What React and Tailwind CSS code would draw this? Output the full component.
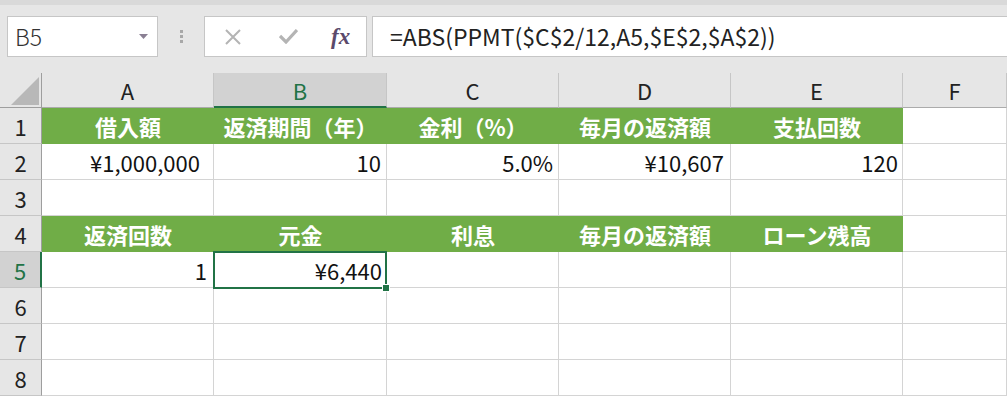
import React from 'react';

const FONT = { fontFamily: '"Noto Sans CJK JP", "Noto Sans", sans-serif' };

const columns = ['A', 'B', 'C', 'D', 'E', 'F'];

// each row: 6 cells (A..F), null = empty
const rows = [
  { n: 1, green: true, cells: ['借入額', '返済期間（年）', '金利（%）', '毎月の返済額', '支払回数', null] },
  { n: 2, cells: ['¥1,000,000', '10', '5.0%', '¥10,607', '120', null], pad: ['pr-[13px]', 'pr-[5px]', 'pr-[5px]', 'pr-[6px]', 'pr-[4px]', ''] },
  { n: 3, cells: [null, null, null, null, null, null] },
  { n: 4, green: true, cells: ['返済回数', '元金', '利息', '毎月の返済額', 'ローン残高', null] },
  { n: 5, cells: ['1', '¥6,440', null, null, null, null], pad: ['pr-[6px]', 'pr-[4px]', '', '', '', ''], active: true },
  { n: 6, cells: [null, null, null, null, null, null] },
  { n: 7, cells: [null, null, null, null, null, null] },
  { n: 8, cells: [null, null, null, null, null, null] },
];

function Cell({ row, text, idx }) {
  const isGreen = row.green && idx < 5;
  if (isGreen) {
    return (
      <div className="h-[36px] bg-[#70ad47] flex items-center justify-center text-white font-bold text-[22px] leading-none">
        {text}
      </div>
    );
  }
  const selected = row.active && idx === 1;
  return (
    <div
      className={`relative h-[36px] border-r border-b border-[#d4d4d4] flex items-center justify-end text-[22px] leading-none text-[#111] ${
        row.pad ? row.pad[idx] : ''
      } ${selected ? 'z-10' : ''}`}
    >
      {text}
      {selected && (
        <>
          <div className="absolute -left-px -top-px w-[174px] h-[38px] border-2 border-[#217346]" />
          <div className="absolute -right-[4px] -bottom-[5px] w-[8px] h-[8px] bg-[#217346] border border-white" />
        </>
      )}
    </div>
  );
}

export default function App() {
  return (
    <div className="w-[1007px] h-[397px] overflow-hidden bg-white" style={FONT}>
      {/* Toolbar: name box + formula bar */}
      <div className="h-[73px] bg-[#e6e6e6] border-t-[5px] border-[#d9d9d9] flex items-start pt-[11px]">
        <div className="ml-[7px] w-[151px] h-[41px] bg-white border border-[#c6c6c6] flex items-center pl-[7px] pr-[9px]">
          <span className="text-[23px] font-light text-[#333] leading-none">B5</span>
          <svg className="ml-auto" width="9" height="5" viewBox="0 0 9 5">
            <path d="M0 0 L9 0 L4.5 5 Z" fill="#8a7f93" />
          </svg>
        </div>
        <div className="w-[46px] h-[41px] flex flex-col items-center justify-center gap-[2px]">
          <span className="w-[3px] h-[3px] bg-[#a8a8a8]" />
          <span className="w-[3px] h-[3px] bg-[#a8a8a8]" />
          <span className="w-[3px] h-[3px] bg-[#a8a8a8]" />
        </div>
        <div className="w-[163px] h-[41px] bg-white border border-[#c6c6c6] flex items-center">
          <svg className="ml-[20px]" width="16" height="16" viewBox="0 0 16 16">
            <path d="M1 1 L15 15 M15 1 L1 15" stroke="#b4b4b4" strokeWidth="2" />
          </svg>
          <svg className="ml-[38px]" width="19" height="15" viewBox="0 0 19 15">
            <path d="M1 7 L7 13 L18 1" stroke="#b4b4b4" strokeWidth="3.2" fill="none" />
          </svg>
          <span
            className="ml-[33px] text-[23px] italic font-bold text-[#5b4a6b] leading-none"
            style={{ fontFamily: '"Liberation Serif", serif' }}
          >
            fx
          </span>
        </div>
        <div className="ml-[5px] flex-1 h-[41px] bg-white border border-[#c6c6c6] border-r-0 flex items-center pl-[17px]">
          <span className="text-[23px] text-[#222] leading-none">=ABS(PPMT($C$2/12,A5,$E$2,$A$2))</span>
        </div>
      </div>

      {/* Sheet grid */}
      <div className="grid grid-cols-[42px_172px_173px_172px_172px_172px_1fr]">
        {/* Column headers */}
        <div className="relative h-[35px] bg-[#e6e6e6] border-r border-b border-[#9e9e9e]">
          <svg className="absolute left-[11px] top-[4px]" width="28" height="28" viewBox="0 0 28 28">
            <path d="M0 28 L28 28 L28 0 Z" fill="#b8b8b8" />
          </svg>
        </div>
        {columns.map((c, i) => (
          <div
            key={c}
            className={`h-[35px] flex items-center justify-center text-[22px] leading-none border-r border-[#c6c6c6] ${
              i === 1
                ? 'bg-[#d2d2d2] text-[#217346] border-b-2 border-b-[#217346]'
                : 'bg-[#e6e6e6] text-[#222] border-b border-b-[#ababab]'
            }`}
          >
            {c}
          </div>
        ))}

        {/* Rows */}
        {rows.map((row) => (
          <React.Fragment key={row.n}>
            <div
              className={`h-[36px] flex items-center justify-center text-[22px] leading-none border-b border-[#c6c6c6] ${
                row.active
                  ? 'bg-[#d2d2d2] text-[#217346] border-r-2 border-r-[#217346]'
                  : 'bg-[#e6e6e6] text-[#222] border-r border-r-[#9e9e9e]'
              }`}
            >
              {row.n}
            </div>
            {row.cells.map((t, i) => (
              <Cell key={i} row={row} text={t} idx={i} />
            ))}
          </React.Fragment>
        ))}
      </div>
    </div>
  );
}
